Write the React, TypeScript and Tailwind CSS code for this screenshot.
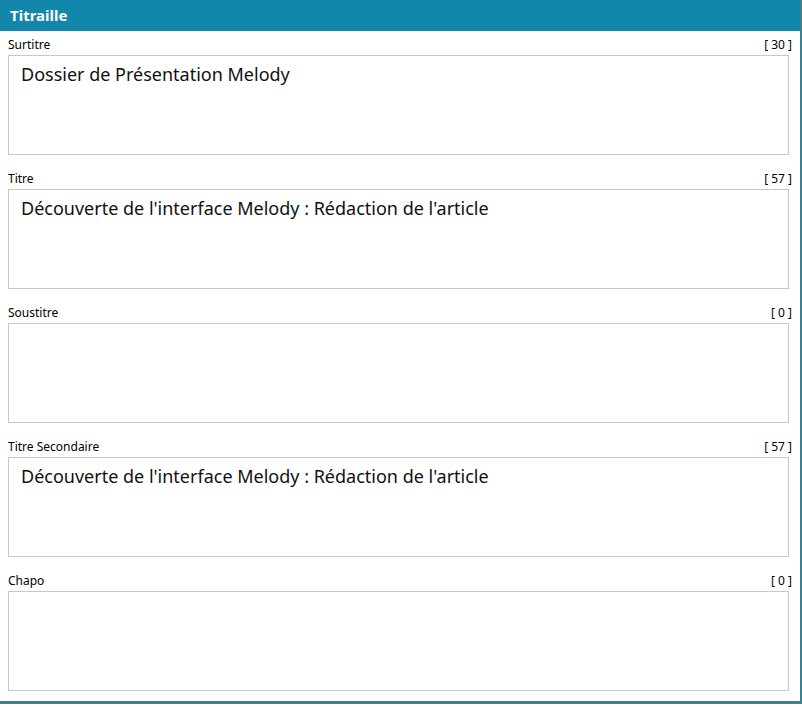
const fields = [
  { label: "Surtitre", count: "[ 30 ]", value: "Dossier de Présentation Melody" },
  { label: "Titre", count: "[ 57 ]", value: "Découverte de l'interface Melody : Rédaction de l'article" },
  { label: "Soustitre", count: "[ 0 ]", value: "" },
  { label: "Titre Secondaire", count: "[ 57 ]", value: "Découverte de l'interface Melody : Rédaction de l'article" },
  { label: "Chapo", count: "[ 0 ]", value: "" },
];

export default function App() {
  return (
    <div className="w-[802px] h-[707px] bg-white font-['Liberation_Sans',Arial,sans-serif]">
      <div className="w-[802px] h-[704px] border-r-2 border-b-[3px] border-[#3f7f8a] flex flex-col">
        {/* Header */}
        <div className="h-[31px] bg-[#1286ab] text-white font-bold text-[15px] flex items-center px-[10px]">
          Titraille
        </div>

        {fields.map((f, i) => (
          <div key={f.label} className={i === 0 ? "" : "mt-[10px]"}>
            <div className="h-[24px] flex items-end justify-between pl-[8px] pr-[8px] pb-[1px] text-[12px] text-black">
              <span>{f.label}</span>
              <span>{f.count}</span>
            </div>
            <div className="ml-[8px] w-[781px] h-[100px] border border-[#c8c8c8] px-[12px] py-[5px] text-[18px] text-[#111]">
              {f.value}
            </div>
          </div>
        ))}
      </div>
    </div>
  );
}
